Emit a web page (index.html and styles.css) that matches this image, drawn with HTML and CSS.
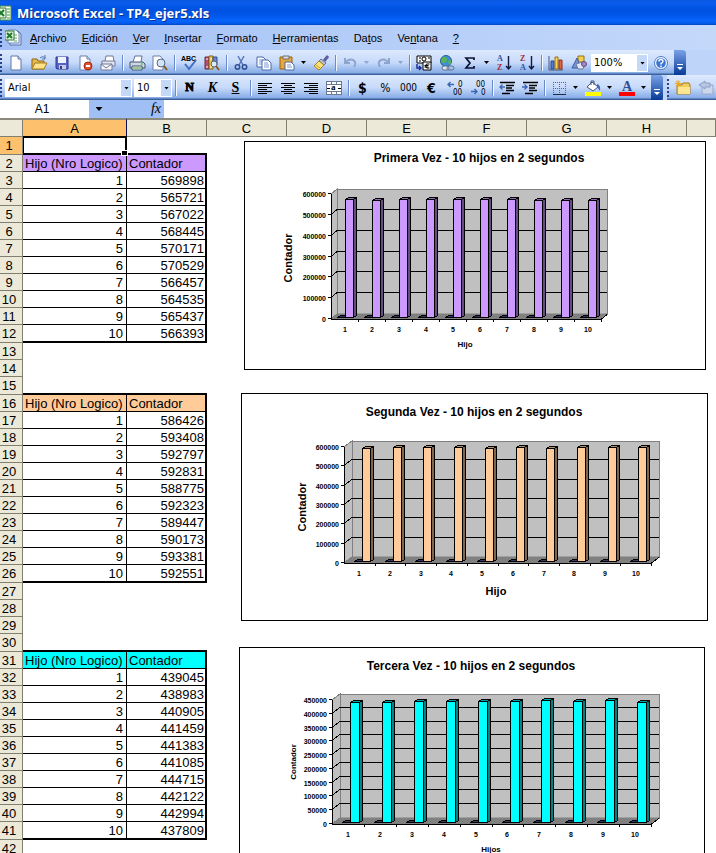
FILE: index.html
```html
<!DOCTYPE html>
<html lang="es">
<head>
<meta charset="utf-8">
<title>Microsoft Excel - TP4_ejer5.xls</title>
<link rel="stylesheet" href="styles.css">
</head>
<body>
<header class="titlebar">
  <svg class="app-icon" width="16" height="16" viewBox="0 0 16 16"><path d="M4 1h11v14H4z" fill="#f4fbf0" stroke="#4b8a4a"/><path d="M11 4h3M11 7h3M11 10h3M11 13h3" stroke="#3f9a3f"/><path d="M0 3h10v10H0z" fill="#e3f2dd" stroke="#2f7d38"/><path d="M2 5l6 6M8 5l-6 6" stroke="#1d7a2a" stroke-width="2"/></svg>
  <h1>Microsoft Excel - TP4_ejer5.xls</h1>
</header>

<nav class="menubar" aria-label="Menú">
  <span class="grip"></span>
  <svg class="doc-icon" width="17" height="17" viewBox="0 0 17 17"><path d="M5 2h8l3 3v11H5z" fill="#dce7fa" stroke="#5672a8"/><path d="M3 1h8l3 3v10H3z" fill="#fff" stroke="#6d86b8"/><path d="M9 6h3M9 9h3M9 12h3" stroke="#5f9f60"/><path d="M0 2h9v9H0z" fill="#dff0da" stroke="#2f7d38"/><path d="M2 4l5 5M7 4L2 9" stroke="#1d7a2a" stroke-width="2"/></svg>
  <a href="#"><u>A</u>rchivo</a>
  <a href="#"><u>E</u>dición</a>
  <a href="#"><u>V</u>er</a>
  <a href="#"><u>I</u>nsertar</a>
  <a href="#"><u>F</u>ormato</a>
  <a href="#"><u>H</u>erramientas</a>
  <a href="#">Da<u>t</u>os</a>
  <a href="#">Ve<u>n</u>tana</a>
  <a href="#"><u>?</u></a>
</nav>

<div class="dock">
  <div class="toolbar" role="toolbar" aria-label="Estándar">
    <span class="grip"></span>
    <button aria-label="Nuevo"><svg viewBox="0 0 16 16"><path d="M3 1h7l3 3v11H3z" fill="#fff" stroke="#5f76a8"/><path d="M10 1v3h3" fill="#c8d8f4" stroke="#5f76a8"/></svg></button>
    <button aria-label="Abrir"><svg viewBox="0 0 16 16"><path d="M1 14V4h5l1 2h6v8z" fill="#e8b94c" stroke="#8a6416"/><path d="M1 14l3-6h12l-3 6z" fill="#ffe28a" stroke="#a47a1e"/><path d="M9 3q3-3 5 0M14 0v4h-3" fill="none" stroke="#4d6fae"/></svg></button>
    <button aria-label="Guardar"><svg viewBox="0 0 16 16"><path d="M2 2h12v12H3l-1-1z" fill="#5763c7" stroke="#34398d"/><path d="M4 2h8v6H4z" fill="#edf2ff"/><path d="M5 10h7v4H5z" fill="#c5cadf"/><path d="M6 11h2v3H6z" fill="#34398d"/></svg></button>
    <button aria-label="Permiso"><svg viewBox="0 0 16 16"><path d="M3 1h7l3 3v11H3z" fill="#fff" stroke="#6a7fb0"/><path d="M10 1v3h3" fill="#c8d8f4" stroke="#6a7fb0"/><circle cx="11" cy="11" r="4" fill="#e0532e" stroke="#a52c12"/><path d="M9 11h4" stroke="#fff" stroke-width="2"/></svg></button>
    <button aria-label="Correo electrónico"><svg viewBox="0 0 16 16"><path d="M5 6l1-5h7l1 5" fill="#fff" stroke="#707a98"/><path d="M2 6h13v5H2z" fill="#e3e6f0" stroke="#707a98"/><path d="M1 9h11v6H1z" fill="#f8f8fc" stroke="#707a98"/><path d="M1 9l5 4 6-4" fill="none" stroke="#707a98"/></svg></button>
    <span class="sep"></span>
    <button aria-label="Imprimir"><svg viewBox="0 0 16 16"><path d="M4 7l2-6h7l-1 6" fill="#fff" stroke="#60709a"/><path d="M1 7h13l2 2v4H1z" fill="#cdd6e4" stroke="#44546e"/><path d="M3 11h10v4H3z" fill="#eef6ee" stroke="#44546e"/><path d="M4 13h8" stroke="#3f9a3f"/><path d="M12 9h2" stroke="#2db52d"/></svg></button>
    <button aria-label="Vista preliminar"><svg viewBox="0 0 16 16"><path d="M1 1h7l3 3v11H1z" fill="#fff" stroke="#6a7fb0"/><circle cx="9" cy="8" r="4" fill="#cfe6f6" stroke="#59687e"/><path d="M12 11l3 4" stroke="#8a5a22" stroke-width="2"/></svg></button>
    <span class="sep"></span>
    <button aria-label="Ortografía"><svg viewBox="0 0 16 16"><text x="0" y="6" class="abc">ABC</text><path d="M4 9l4 5 7-9" fill="none" stroke="#3f6fc4" stroke-width="2"/></svg></button>
    <button aria-label="Referencia"><svg viewBox="0 0 16 16"><path d="M1 2h4v12H1z" fill="#b84f73" stroke="#6b2945"/><path d="M5 1h4v13H5z" fill="#f0c64c" stroke="#856312"/><path d="M9 2h4v8H9z" fill="#6b86cf" stroke="#33508f"/><path d="M2 4h2M6 4h2M2 12h2M6 12h2" stroke="#fff"/><circle cx="10" cy="9" r="3" fill="#d7ecf8" stroke="#54627a"/><path d="M12 11l3 4" stroke="#8a5a22" stroke-width="2"/></svg></button>
    <span class="sep"></span>
    <button aria-label="Cortar"><svg viewBox="0 0 16 16"><path d="M5 1l5 9M11 1L6 10" stroke="#5676b8" stroke-width="1.5"/><circle cx="4.500" cy="12" r="2.200" fill="none" stroke="#2e4f94" stroke-width="1.500"/><circle cx="11.500" cy="12" r="2.200" fill="none" stroke="#2e4f94" stroke-width="1.500"/></svg></button>
    <button aria-label="Copiar"><svg viewBox="0 0 16 16"><path d="M1 2h6l3 3v7H1z" fill="#fff" stroke="#4868ac"/><path d="M3 5h4M3 7h4M3 9h4" stroke="#7b9ad6"/><path d="M6 5h6l3 3v7H6z" fill="#fff" stroke="#4868ac"/><path d="M8 8h4M8 10h5M8 12h5" stroke="#7b9ad6"/></svg></button>
    <button aria-label="Pegar"><svg viewBox="0 0 16 16"><path d="M1 2h12v12H1z" fill="#e8a73a" stroke="#95600e"/><path d="M4 1h6v3H4z" fill="#dcdcdc" stroke="#6f6f6f"/><path d="M6 7h6l3 3v5H6z" fill="#fff" stroke="#4868ac"/><path d="M8 10h4M8 12h5" stroke="#7b9ad6"/></svg></button>
    <button class="drop" aria-label="Opciones de pegado"><i></i></button>
    <button aria-label="Copiar formato"><svg viewBox="0 0 16 16"><path d="M15 1l-4 5" stroke="#6060a0" stroke-width="3"/><path d="M8 4l5 4-2 2-5-4z" fill="#b9c2dc" stroke="#6a7292"/><path d="M6 6l5 4-5 5-5-4z" fill="#ffe27a" stroke="#a98420"/><path d="M3 10l4 3" stroke="#c59a2a"/></svg></button>
    <span class="sep"></span>
    <button aria-label="Deshacer"><svg viewBox="0 0 16 16"><path d="M3 3v5h5M3 8q4-5 8-3t1 7" fill="none" stroke="#8ea5cf" stroke-width="2"/></svg></button>
    <button class="drop off" aria-label="Lista deshacer"><i></i></button>
    <button aria-label="Rehacer"><svg viewBox="0 0 16 16"><path d="M13 3v5H8M13 8Q9 3 5 5t-1 7" fill="none" stroke="#8ea5cf" stroke-width="2"/></svg></button>
    <button class="drop off" aria-label="Lista rehacer"><i></i></button>
    <span class="sep"></span>
    <button aria-label="Conversión de euros"><svg viewBox="0 0 16 16"><path d="M1 1h14v7H1z" fill="#fff" stroke="#000"/><path d="M3 3h2M12 3h2M3 6h2" stroke="#000"/><circle cx="8" cy="4" r="2" fill="none" stroke="#000"/><path d="M7 7h8v8H7z" fill="#fff" stroke="#000"/><path d="M13.500 9q-4-1-4 2t4 2M8.500 10.500h4M8.500 12h4" fill="none" stroke="#000"/><path d="M1 9v4h4M3 11l2 2-2 2" fill="none" stroke="#1c2f9c" stroke-width="1.500"/></svg></button>
    <button aria-label="Hipervínculo"><svg viewBox="0 0 16 16"><circle cx="7" cy="6" r="5.500" fill="#3d8fd6" stroke="#275f94"/><path d="M4 2q4-1 4 2T5 8Q2 8 2 5zM9 6l3-1v3l-2 2z" fill="#59b452"/><rect x="3" y="11" width="7" height="4" rx="2" fill="#dfe6f2" stroke="#62718f"/><rect x="8" y="11" width="7" height="4" rx="2" fill="none" stroke="#62718f"/></svg></button>
    <button aria-label="Autosuma"><svg viewBox="0 0 16 16"><path d="M12 5V3H4l4 5-4 5h8v-2" fill="none" stroke="#0a1030" stroke-width="1.700"/></svg></button>
    <button class="drop" aria-label="Opciones de suma"><i></i></button>
    <button aria-label="Orden ascendente"><svg viewBox="0 0 16 16"><text x="1" y="6" class="sort blue">A</text><text x="1" y="15" class="sort red">Z</text><path d="M12.500 1v13M10 11l2.500 3 2.500-3" fill="none" stroke="#101840" stroke-width="1.400"/></svg></button>
    <button aria-label="Orden descendente"><svg viewBox="0 0 16 16"><text x="1" y="6" class="sort red">Z</text><text x="1" y="15" class="sort blue">A</text><path d="M12.500 1v13M10 11l2.500 3 2.500-3" fill="none" stroke="#101840" stroke-width="1.400"/></svg></button>
    <span class="sep"></span>
    <button aria-label="Asistente para gráficos"><svg viewBox="0 0 16 16"><path d="M1 1v14h14" fill="none" stroke="#4a5670"/><path d="M3 6h3v8H3z" fill="#4f7be0" stroke="#2a448c"/><path d="M7 2h3v12H7z" fill="#ffd64a" stroke="#957112"/><path d="M11 5h3v9h-3z" fill="#e4623c" stroke="#90301a"/></svg></button>
    <button aria-label="Dibujo"><svg viewBox="0 0 16 16"><path d="M7 1h6v6H7z" fill="#f2cf50" stroke="#8f7418"/><path d="M1 13L6 3l4 10z" fill="#7794dc" stroke="#415b9f"/><path d="M5 9q5-3 9 0l-2 5H7z" fill="#dfe5f5" stroke="#6c7796"/><circle cx="13" cy="9" r="2.500" fill="#a586c8" stroke="#634b85"/></svg></button>
    <label class="combo zoom"><select aria-label="Zoom"><option>100%</option></select><i></i></label>
    <button aria-label="Ayuda"><svg viewBox="0 0 16 16"><circle cx="8" cy="8" r="6.500" fill="#f5f9ff" stroke="#4a7bd0"/><circle cx="8" cy="8" r="4.800" fill="#3a74d6"/><path d="M6 6.500q0-2 2-2t2 2q0 1-2 2v1M8 10.500v1.500" fill="none" stroke="#fff" stroke-width="1.400"/></svg></button>
    <button class="cap" aria-label="Más botones"><i></i></button>
  </div>

  <div class="dockrow">
    <div class="toolbar" role="toolbar" aria-label="Formato">
      <span class="grip"></span>
      <label class="combo font"><select aria-label="Fuente"><option>Arial</option></select><i></i></label>
      <label class="combo size"><select aria-label="Tamaño"><option>10</option></select><i></i></label>
      <span class="sep"></span>
      <button class="glyph" aria-label="Negrita"><b>N</b></button>
      <button class="glyph" aria-label="Cursiva"><em>K</em></button>
      <button class="glyph" aria-label="Subrayado"><u>S</u></button>
      <span class="sep"></span>
      <button aria-label="Alinear a la izquierda"><svg viewBox="0 0 16 16" class="crisp"><path d="M1 3.500h14M1 5.500h9M1 7.500h14M1 9.500h9M1 11.500h14M1 13.500h9" stroke="#000"/></svg></button>
      <button aria-label="Centrar"><svg viewBox="0 0 16 16" class="crisp"><path d="M1 3.500h14M4 5.500h8M1 7.500h14M4 9.500h8M1 11.500h14M4 13.500h8" stroke="#000"/></svg></button>
      <button aria-label="Alinear a la derecha"><svg viewBox="0 0 16 16" class="crisp"><path d="M1 3.500h14M6 5.500h9M1 7.500h14M6 9.500h9M1 11.500h14M6 13.500h9" stroke="#000"/></svg></button>
      <button aria-label="Combinar y centrar"><svg viewBox="0 0 16 16" class="crisp"><path d="M.5 1.500h15v13H.5z" fill="#fff" stroke="#6b7896"/><path d="M5.500 1v3M10.500 1v3M5.500 12v3M10.500 12v3M0 4.500h16M0 11.500h16" stroke="#6b7896"/><path d="M1 8h3M12 8h3" stroke="#000"/><text x="5" y="10" class="merge">a</text></svg></button>
      <span class="sep"></span>
      <button class="money" aria-label="Estilo moneda"><b>$</b></button>
      <button class="sign" aria-label="Estilo porcentual">%</button>
      <button class="thousands" aria-label="Estilo millares">000</button>
      <button class="money" aria-label="Euro"><b>€</b></button>
      <button aria-label="Aumentar decimales"><svg viewBox="0 0 16 16"><path d="M1 4.500h6M3.500 2L1 4.500 3.500 7" fill="none" stroke="#3967b5" stroke-width="1.400"/><text x="11" y="7" class="dec">0</text><text x="6" y="15" class="dec">00</text></svg></button>
      <button aria-label="Disminuir decimales"><svg viewBox="0 0 16 16"><path d="M1 11.500h6M4.500 9L7 11.500 4.500 14" fill="none" stroke="#3967b5" stroke-width="1.400"/><text x="6" y="7" class="dec">00</text><text x="11" y="15" class="dec">0</text></svg></button>
      <span class="sep"></span>
      <button aria-label="Disminuir sangría"><svg viewBox="0 0 16 16"><path d="M1 2.500h15M7 5.500h8M7 8h6M7 10.500h8M3 13.500h8" stroke="#000" stroke-width="1.300"/><path d="M6 7H1M3.500 4.500L1 7l2.500 2.500" fill="none" stroke="#3967b5" stroke-width="1.400"/></svg></button>
      <button aria-label="Aumentar sangría"><svg viewBox="0 0 16 16"><path d="M1 2.500h15M7 5.500h8M7 8h6M7 10.500h8M3 13.500h8" stroke="#000" stroke-width="1.300"/><path d="M0 7h5M2.500 4.500L5 7 2.500 9.500" fill="none" stroke="#3967b5" stroke-width="1.400"/></svg></button>
      <span class="sep"></span>
      <button aria-label="Bordes"><svg viewBox="0 0 16 16" class="crisp"><path d="M2 2.500h13M2 8.500h13M2.500 2v12M8.500 2v12M14.500 2v12" stroke="#53668c" stroke-dasharray="1 1"/><path d="M2 14.500h13" stroke="#1c2844"/></svg></button>
      <button class="drop" aria-label="Opciones de bordes"><i></i></button>
      <button aria-label="Color de relleno"><svg viewBox="0 0 16 16"><path d="M7 2l6 5-5 4-6-4z" fill="#fff" stroke="#43547c"/><path d="M6 5V1h3v4" fill="none" stroke="#43547c"/><path d="M12 4q4 1 3 7-2-3-3-4z" fill="#3c69bd"/><path d="M0 12h16v4H0z" fill="#ff0"/></svg></button>
      <button class="drop" aria-label="Opciones de relleno"><i></i></button>
      <button aria-label="Color de fuente"><svg viewBox="0 0 16 16"><text x="3" y="11" class="fontcolor">A</text><path d="M0 12h16v4H0z" fill="red"/></svg></button>
      <button class="drop" aria-label="Opciones de color"><i></i></button>
      <button class="cap" aria-label="Más botones"><i></i></button>
    </div>
    <div class="toolbar rest" role="toolbar" aria-label="Revisión">
      <span class="grip"></span>
      <button aria-label="Nueva carpeta"><svg viewBox="0 0 16 16"><path d="M2 14V5h5l1-2h6l1 2v9z" fill="#f2cd5c" stroke="#a27b1d"/><path d="M3 7h12v7H3z" fill="#ffe592"/><path d="M3 0v7M0 3.500h7M1 1l4 5M5 1L1 6" stroke="#f2a81c"/></svg></button>
      <button aria-label="Responder"><svg viewBox="0 0 16 16"><path d="M4 5h11v9H4z" fill="#ccd7ec" stroke="#98a9c9"/><path d="M7 1L1 5l6 4V7h5V3H7z" fill="#b5c5e2" stroke="#8b9fc6"/></svg></button>
    </div>
  </div>
</div>

<div class="formulabar">
  <input class="namebox" aria-label="Cuadro de nombres" value="A1">
  <button class="namedrop" aria-label="Nombres"><i></i></button>
  <button class="fx" aria-label="Insertar función"><em>fx</em></button>
  <input class="formula" aria-label="Barra de fórmulas" value="">
</div>

<main class="sheet">
  <table class="grid">
    <colgroup><col class="c-row"><col class="c-a"><col class="c-b"><col class="c-n"><col class="c-n"><col class="c-n"><col class="c-n"><col class="c-n"><col class="c-n"><col></colgroup>
    <thead><tr><th></th><th class="on">A</th><th>B</th><th>C</th><th>D</th><th>E</th><th>F</th><th>G</th><th>H</th><th></th></tr></thead>
    <tbody id="rows"></tbody>
  </table>
  <figure class="chart chart-1" id="chart-1"></figure>
  <figure class="chart chart-2" id="chart-2"></figure>
  <figure class="chart chart-3" id="chart-3"></figure>
</main>
<script src="script.js"></script>
</body>
</html>
```
FILE: styles.css
```css
* { box-sizing: border-box; }
body {
  margin: 0;
  height: 100vh;
  overflow: hidden;
  display: flex;
  flex-direction: column;
  background: #fff;
  color: #000;
  font-family: Tahoma, "DejaVu Sans Condensed", "Liberation Sans", sans-serif;
  font-size: 11px;
}
button, input, select { font: inherit; color: inherit; border: 0; margin: 0; padding: 0; background: none; border-radius: 0; }
button { display: flex; align-items: center; justify-content: center; flex: none; }

.titlebar {
  flex: none;
  height: 25px;
  display: flex;
  align-items: center;
  gap: 5px;
  background: linear-gradient(#0a58dc, #0a5cf0 3px, #0052e0 9px, #0054e6 14px, #0664fc 21px, #0456e4 24px, #0340b4);
}
.app-icon { margin-left: -4px; }
.titlebar h1 {
  margin: 0;
  font: bold 13px "Open Sans", "Noto Sans", sans-serif;
  color: #fff;
  text-shadow: 1px 1px #0a2f8a;
  white-space: nowrap;
}

.menubar {
  flex: none;
  height: 25px;
  display: flex;
  align-items: center;
  background: linear-gradient(90deg, #a3c1f6, #c4d8fa);
  font-family: "Liberation Sans", Arial, sans-serif;
  white-space: nowrap;
}
.doc-icon { margin: 0 8px 0 1px; }
.menubar a { color: #000; text-decoration: none; margin-right: 15px; }

.grip {
  flex: none;
  width: 4px;
  height: 18px;
  background: radial-gradient(circle at 1px 1px, #27418a 1px, transparent 1px) 0 0 / 4px 4px;
}
.dock { flex: none; background: #bfd4f9; display: flex; flex-direction: column; align-items: flex-start; }
.dockrow { display: flex; align-self: stretch; gap: 4px; }
.toolbar {
  flex: none;
  height: 25px;
  display: flex;
  align-items: center;
  background: linear-gradient(#dde9fd, #c7dafa 50%, #86ace6 23px, #3b619c 24px);
  overflow: hidden;
}
.toolbar.rest { flex: 1; }
.toolbar button { width: 23px; height: 22px; }
.toolbar svg { width: 16px; height: 16px; display: block; overflow: visible; }
.toolbar .drop { width: 11px; }
.crisp { shape-rendering: crispEdges; }
.sep { flex: none; width: 6px; height: 16px; background: linear-gradient(90deg, transparent 3px, #6a8ccb 3px, #6a8ccb 4px, #f1f9ff 4px, #f1f9ff 5px, transparent 5px); }
i { flex: none; width: 5px; height: 3px; background: #000; clip-path: polygon(0 0, 100% 0, 50% 100%); }
.off i { background: #8ea5cf; }
.toolbar .cap { width: 12px; height: 25px; margin-left: 2px; align-items: flex-end; padding-bottom: 5px; background: linear-gradient(#7ba2e7, #063a97); border-radius: 0 3px 3px 0; }
.cap i { width: 6px; height: 6px; background: #fff; clip-path: polygon(0 0, 100% 0, 100% 17%, 0 17%, 0 50%, 100% 50%, 50% 100%, 0 50%); }

.combo { flex: none; display: flex; align-items: center; height: 18px; background: #fff; position: relative; }
.combo select { appearance: none; width: 100%; height: 18px; padding-left: 3px; }
.combo i { position: absolute; right: 3px; top: 8px; }
.combo::before { content: ""; position: absolute; right: 1px; top: 1px; width: 10px; height: 16px; background: #c4d8f8; }
.font { width: 127px; margin-left: 1px; }
.size { width: 38px; margin-left: 2px; }
.zoom { width: 57px; margin: 0 1px; }

.glyph { font: 14px "Liberation Serif", serif; }
.glyph b { -webkit-text-stroke: 1px #000; font-size: 12px; }
.glyph em { font-weight: bold; }
.glyph u { font-weight: bold; }
.money { font-size: 14px; }
.sign { font-size: 12px; }
.thousands { font: 10px "DejaVu Sans Condensed", sans-serif; }
.abc { font: bold 7px "Liberation Sans", sans-serif; }
.sort { font: bold 8px "Liberation Serif", serif; }
.blue { fill: #2b54a6; }
.red { fill: #a32a44; }
.merge { font: bold 9px "Liberation Serif", serif; }
.dec { font: 8px "DejaVu Sans Condensed", sans-serif; }
.fontcolor { font: bold 14px "Liberation Serif", serif; fill: #2e4f94; }

.formulabar { flex: none; height: 18px; display: flex; background: #a0bff5; }
.namebox { width: 89px; background: #fff; text-align: center; font: 12px "Liberation Sans", sans-serif; padding-right: 5px; }
.namedrop { width: 20px; }
.namedrop i { width: 7px; height: 4px; }
.fx { width: 55px; justify-content: flex-end; padding-right: 3px; font: 14px "Liberation Serif", serif; }
.formula { flex: 1; min-width: 0; background: #fff; }

.sheet { flex: 1; min-height: 0; position: relative; overflow: hidden; font: 13px/15px "Liberation Sans", Arial, sans-serif; }
.grid { width: 100%; table-layout: fixed; border-collapse: separate; border-spacing: 0; }
.c-row { width: 23px; }
.c-a { width: 104px; }
.c-b, .c-n { width: 80px; }
th, td { padding: 0; font-weight: normal; overflow: hidden; white-space: nowrap; }
thead th { height: 19px; background: #ece9d8; border-top: 2px solid #8a897c; border-right: 1px solid #807f70; border-bottom: 1px solid #807f70; }
thead .on { background: #fdc16e; border-right-color: #10105a; border-bottom-color: #000; }
tbody th { height: 17px; background: #ece9d8; border-right: 1px solid #807f70; border-bottom: 1px solid #807f70; padding-right: 4px; }
tbody .tall th { height: 18px; }
tbody .on { background: #fdc16e; }
.data td:nth-child(2), .data td:nth-child(3) { text-align: right; border-right: 1px solid #000; border-bottom: 1px solid #000; padding: 0 3px; }
.data td:nth-child(3) { border-right-width: 2px; padding-right: 1px; }
.data.last td:nth-child(2), .data.last td:nth-child(3),
.before td:nth-child(2), .before td:nth-child(3) { border-bottom: 2px solid #000; }
.data.head td:nth-child(-n+3) { text-align: left; padding: 0 2px; }
.violet td:nth-child(-n+3) { background: #c9f; }
.peach td:nth-child(-n+3) { background: #fc9; }
.cyan td:nth-child(-n+3) { background: #0ff; }
.before td.active { position: relative; border: solid #000; border-width: 1px 2px 2px 1px; overflow: visible; }
.active::after { content: ""; position: absolute; right: -3px; bottom: -3px; width: 5px; height: 4px; background: #000; border: 1px solid #fff; }

.chart { position: absolute; margin: 0; border: 1px solid #000; background: #fff; overflow: hidden; }
.chart svg { display: block; }
.chart-1 { left: 244px; top: 23px; }
.chart-2 { left: 241px; top: 275px; }
.chart-3 { left: 239px; top: 529px; }
.chart text { font-family: "Liberation Sans", Arial, sans-serif; fill: #000; text-anchor: middle; }
.chart .title { font-weight: bold; font-size: 12px; }
.chart .axis { font-weight: bold; font-size: 11px; }
.chart .small { font-weight: bold; font-size: 8px; }
.chart .tick { font-size: 7px; font-weight: bold; }
.chart .value { text-anchor: end; }
.chart .shape { stroke: #000; shape-rendering: crispEdges; }
.chart .wall { fill: #c0c0c0; stroke: #808080; shape-rendering: crispEdges; }
.chart .floor { fill: #808080; stroke: #808080; }
.chart .line { stroke: #000; fill: none; shape-rendering: crispEdges; }
.chart .first { fill: #333366; stroke: #000; }
```
FILE: script.js
```js
const tables = [
  { start: 2, tone: "violet", values: [569898, 565721, 567022, 568445, 570171, 570529, 566457, 564535, 565437, 566393] },
  { start: 16, tone: "peach", values: [586426, 593408, 592797, 592831, 588775, 592323, 589447, 590173, 593381, 592551] },
  { start: 31, tone: "cyan", values: [439045, 438983, 440905, 441459, 441383, 441085, 444715, 442122, 442994, 437809] }
];

let html = "";
for (let row = 1; row <= 42; row++) {
  const table = tables.find(t => row >= t.start && row <= t.start + 10);
  const before = tables.some(t => row === t.start - 1);
  const classes = [];
  let a = "", b = "";
  if (table) {
    const index = row - table.start;
    classes.push("data");
    a = index ? index : "Hijo (Nro Logico)";
    b = index ? table.values[index - 1] : "Contador";
    if (!index) classes.push("head", table.tone);
    if (index === 10) classes.push("last", "tall");
  }
  if (before) classes.push("before", "tall");
  html += `<tr class="${classes.join(" ")}"><th${row === 1 ? ' class="on"' : ""}>${row}</th>` +
    `<td${row === 1 ? ' class="active"' : ""}>${a}</td><td>${b}</td><td colspan="7"></td></tr>`;
}
document.getElementById("rows").innerHTML = html;

// Draws a 3-D column chart. (x, top)-(x + w, bottom) is the front plane; dx, dy its depth.
function drawChart(id, c) {
  const { x, top, bottom, w, dx, dy } = c;
  const h = bottom - top, pitch = w / 10;
  const poly = (cls, pts, extra = "") => `<polygon class="${cls}" points="${pts.join(" ")}"${extra}/>`;
  const text = (cls, tx, ty, s) => `<text class="${cls}" x="${tx}" y="${ty}">${s}</text>`;
  let s = poly("wall", [x + dx, top - dy, x + dx + w, top - dy, x + dx + w, bottom - dy, x + dx, bottom - dy]);
  s += poly("wall", [x, top, x + dx, top - dy, x + dx, bottom - dy, x, bottom]);
  s += poly("floor", [x, bottom, x + dx, bottom - dy, x + dx + w, bottom - dy, x + w, bottom]);
  const steps = c.max / c.step;
  for (let i = 0; i <= steps; i++) {
    const y = Math.round(bottom - h * i / steps) - 0.5;
    if (i && i < steps) s += `<path class="line" d="M${x} ${y}l${dx} ${-dy}h${w}"/>`;
    s += `<path class="line" d="M${x - 3} ${y}h3"/>` + text("tick value", x - 5, y + 3, i * c.step);
  }
  s += `<path class="line" d="M${x + 0.5} ${top}V${bottom + 0.5}H${x + w}l${dx} ${-dy}"/>`;
  c.values.forEach((v, i) => {
    const left = Math.round(x + pitch * i + c.inset) + 0.5, base = bottom - 1.5;
    const y = Math.round(base - h * v / c.max) + 0.5, bw = c.bar, ex = 3, ey = 2;
    s += poly("shape first", [left - 8, base, left - 5, base - 2, left + 1, base - 2, left, base]);
    s += poly("shape", [left, y, left + ex, y - ey, left + bw + ex, y - ey, left + bw, y], ` fill="${c.shade[0]}"`);
    s += poly("shape", [left + bw, y, left + bw + ex, y - ey, left + bw + ex, base - ey, left + bw, base], ` fill="${c.shade[1]}"`);
    s += `<rect class="shape" x="${left}" y="${y}" width="${bw}" height="${base - y}" fill="${c.fill}"/>`;
    s += text("tick", Math.round(x + pitch * (i + 0.5)), bottom + 13, i + 1);
    s += `<path class="line" d="M${Math.round(x + pitch * (i + 1)) + 0.5} ${bottom}v3"/>`;
  });
  s += text("title", c.title[0], c.title[1], c.title[2]);
  s += text(c.xlabel[3], c.xlabel[0], c.xlabel[1], c.xlabel[2]);
  s += `<text class="${c.ylabel[2]}" transform="translate(${c.ylabel[0]} ${c.ylabel[1]}) rotate(-90)">Contador</text>`;
  document.getElementById(id).innerHTML = `<svg width="${c.size[0]}" height="${c.size[1]}" role="img" aria-label="${c.title[2]}">${s}</svg>`;
}

drawChart("chart-1", {
  size: [460, 227], x: 86, top: 52, bottom: 177, w: 270, dx: 6, dy: 5, inset: 14, bar: 8, max: 600000, step: 100000,
  values: tables[0].values, fill: "#cc99ff", shade: ["#8f6bb3", "#664d80"],
  title: [234, 20, "Primera Vez - 10 hijos en 2 segundos"], xlabel: [220, 205, "Hijo", "small"], ylabel: [47, 116, "axis"]
});
drawChart("chart-2", {
  size: [465, 226], x: 102, top: 53, bottom: 169, w: 307, dx: 8, dy: 6, inset: 18, bar: 8, max: 600000, step: 100000,
  values: tables[1].values, fill: "#ffcc99", shade: ["#b38f6b", "#80664d"],
  title: [232, 22, "Segunda Vez - 10 hijos en 2 segundos"], xlabel: [254, 201, "Hijo", "axis"], ylabel: [64, 113, "axis"]
});
drawChart("chart-3", {
  size: [464, 226], x: 92, top: 52, bottom: 176, w: 319, dx: 8, dy: 6, inset: 18, bar: 9, max: 450000, step: 50000,
  values: tables[2].values, fill: "#00ffff", shade: ["#00a3a3", "#008080"],
  title: [231, 22, "Tercera Vez - 10 hijos en 2 segundos"], xlabel: [251, 204, "Hijos", "small"], ylabel: [56, 114, "small"]
});
```
